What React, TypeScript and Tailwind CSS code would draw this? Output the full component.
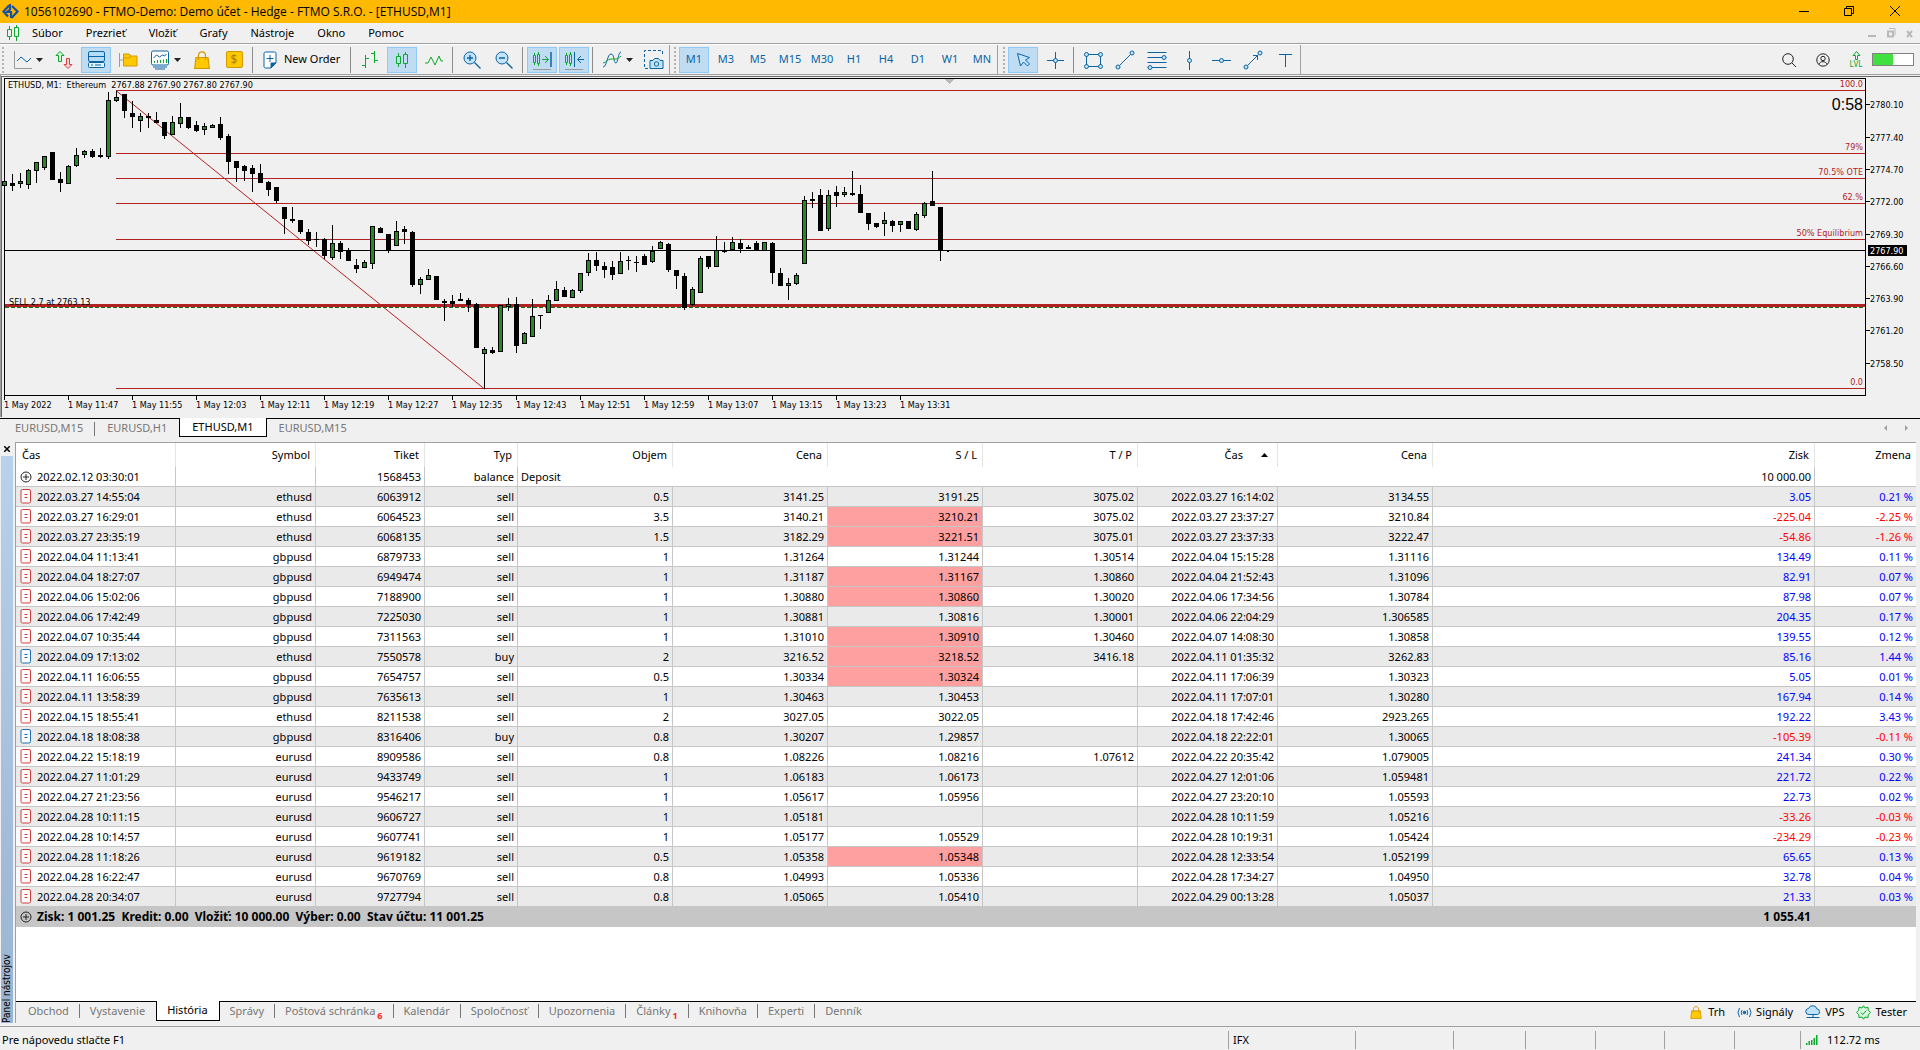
import React, { useState } from 'react';
import clsx from 'clsx';

type Candle = [high: number, low: number, top: number, bottom: number, up: 0 | 1];

// One candle per minute, 8px apart: wick top, wick bottom, body top, body bottom, bullish
const CANDLES: Candle[] = [
  [106, 111, 106, 111, 1], [99, 116, 108, 111, 0], [98, 113, 106, 109, 1], [94, 114, 95, 110, 1],
  [87, 108, 87, 96, 1], [81, 95, 81, 93, 1], [77, 105, 77, 105, 0], [97, 117, 104, 108, 0],
  [90, 109, 91, 109, 1], [73, 92, 80, 91, 1], [75, 83, 76, 80, 1], [74, 83, 76, 82, 0],
  [73, 83, 80, 82, 0], [17, 84, 25, 82, 1], [16, 27, 22, 26, 1], [19, 43, 19, 36, 0],
  [26, 53, 38, 42, 0], [38, 57, 41, 46, 1], [38, 53, 41, 43, 0], [37, 48, 45, 48, 0],
  [47, 64, 47, 61, 0], [41, 60, 47, 60, 1], [28, 53, 42, 49, 1], [42, 54, 42, 53, 0],
  [46, 57, 50, 56, 0], [48, 60, 51, 55, 1], [49, 53, 50, 53, 1], [42, 65, 49, 63, 0],
  [59, 99, 61, 87, 0], [86, 107, 86, 93, 0], [90, 106, 91, 96, 0], [90, 117, 93, 99, 0],
  [89, 108, 98, 108, 0], [106, 121, 107, 115, 0], [112, 128, 112, 126, 0], [132, 159, 132, 144, 0],
  [132, 148, 144, 146, 0], [145, 159, 145, 157, 0], [154, 170, 157, 166, 0], [157, 172, 164, 165, 0],
  [163, 184, 164, 181, 0], [150, 185, 168, 183, 1], [166, 184, 168, 177, 0], [173, 186, 175, 186, 0],
  [184, 198, 190, 194, 0], [185, 193, 187, 193, 1], [151, 194, 151, 189, 1], [152, 158, 153, 158, 0],
  [159, 178, 159, 175, 0], [146, 171, 156, 171, 1], [151, 169, 154, 157, 0], [156, 212, 157, 210, 0],
  [202, 219, 204, 210, 1], [194, 205, 200, 205, 1], [201, 225, 201, 225, 0], [224, 246, 226, 228, 0],
  [220, 232, 226, 229, 0], [218, 226, 224, 226, 0], [223, 237, 225, 230, 0], [228, 273, 229, 273, 0],
  [272, 314, 274, 279, 1], [272, 279, 275, 278, 0], [230, 277, 230, 277, 1], [223, 236, 229, 232, 1],
  [222, 278, 229, 271, 0], [257, 269, 258, 269, 1], [224, 262, 241, 262, 1], [240, 254, 240, 241, 0],
  [220, 238, 225, 238, 1], [206, 226, 214, 226, 1], [212, 222, 215, 222, 0], [214, 223, 215, 223, 1],
  [198, 218, 198, 216, 1], [178, 201, 185, 198, 1], [177, 196, 185, 191, 0], [187, 203, 191, 195, 0],
  [186, 205, 192, 200, 0], [177, 199, 186, 199, 1], [181, 195, 185, 186, 0], [181, 197, 187, 188, 0],
  [179, 190, 181, 190, 0], [171, 188, 176, 187, 1], [166, 174, 167, 174, 1], [168, 197, 169, 195, 0],
  [195, 214, 195, 201, 0], [198, 235, 201, 233, 0], [212, 231, 214, 230, 1], [181, 218, 183, 218, 1],
  [181, 194, 181, 192, 0], [161, 192, 175, 192, 1], [167, 178, 176, 177, 0], [162, 176, 167, 175, 1],
  [164, 178, 168, 174, 0], [170, 174, 172, 174, 0], [166, 176, 168, 175, 0], [167, 176, 167, 176, 1],
  [167, 209, 168, 198, 0], [193, 211, 198, 211, 0], [203, 225, 208, 211, 1], [198, 210, 200, 209, 1],
  [121, 189, 125, 189, 1], [117, 133, 124, 126, 0], [114, 156, 120, 156, 0], [115, 156, 120, 154, 1],
  [111, 132, 117, 121, 0], [112, 122, 117, 120, 1], [96, 121, 118, 120, 0], [110, 138, 119, 138, 0],
  [138, 155, 138, 149, 0], [148, 153, 148, 152, 0], [137, 161, 145, 149, 1], [145, 157, 146, 151, 0],
  [146, 157, 146, 150, 1], [146, 154, 146, 154, 0], [137, 156, 139, 155, 1], [127, 143, 128, 141, 1],
  [96, 131, 126, 131, 0], [132, 186, 132, 176, 0],
];

const FIB_LEVELS = [
  { y: 15, label: '100.0' },
  { y: 78, label: '79%' },
  { y: 103, label: '70.5% OTE' },
  { y: 128, label: '62.%' },
  { y: 164, label: '50% Equilibrium' },
  { y: 313, label: '0.0' },
];

const PRICES = [
  { y: 29, label: '2780.10' },
  { y: 62, label: '2777.40' },
  { y: 94, label: '2774.70' },
  { y: 126, label: '2772.00' },
  { y: 159, label: '2769.30' },
  { y: 191, label: '2766.60' },
  { y: 223, label: '2763.90' },
  { y: 255, label: '2761.20' },
  { y: 288, label: '2758.50' },
];

const TIMES = [
  '1 May 2022', '1 May 11:47', '1 May 11:55', '1 May 12:03', '1 May 12:11', '1 May 12:19', '1 May 12:27', '1 May 12:35',
  '1 May 12:43', '1 May 12:51', '1 May 12:59', '1 May 13:07', '1 May 13:15', '1 May 13:23', '1 May 13:31',
];

interface Deal {
  open: string;
  symbol: string;
  ticket: string;
  type: 'buy' | 'sell';
  volume: string;
  price: string;
  sl: string;
  tp: string;
  close: string;
  closePrice: string;
  profit: string;
  change: string;
  slHit?: boolean;
}

const deal = (
  open: string, symbol: string, ticket: string, type: 'buy' | 'sell', volume: string, price: string, sl: string,
  tp: string, close: string, closePrice: string, profit: string, change: string, slHit = false,
): Deal => ({ open, symbol, ticket, type, volume, price, sl, tp, close, closePrice, profit, change, slHit });

const DEALS: Deal[] = [
  deal('2022.03.27 14:55:04', 'ethusd', '6063912', 'sell', '0.5', '3141.25', '3191.25', '3075.02', '2022.03.27 16:14:02', '3134.55', '3.05', '0.21 %'),
  deal('2022.03.27 16:29:01', 'ethusd', '6064523', 'sell', '3.5', '3140.21', '3210.21', '3075.02', '2022.03.27 23:37:27', '3210.84', '-225.04', '-2.25 %', true),
  deal('2022.03.27 23:35:19', 'ethusd', '6068135', 'sell', '1.5', '3182.29', '3221.51', '3075.01', '2022.03.27 23:37:33', '3222.47', '-54.86', '-1.26 %', true),
  deal('2022.04.04 11:13:41', 'gbpusd', '6879733', 'sell', '1', '1.31264', '1.31244', '1.30514', '2022.04.04 15:15:28', '1.31116', '134.49', '0.11 %'),
  deal('2022.04.04 18:27:07', 'gbpusd', '6949474', 'sell', '1', '1.31187', '1.31167', '1.30860', '2022.04.04 21:52:43', '1.31096', '82.91', '0.07 %', true),
  deal('2022.04.06 15:02:06', 'gbpusd', '7188900', 'sell', '1', '1.30880', '1.30860', '1.30020', '2022.04.06 17:34:56', '1.30784', '87.98', '0.07 %', true),
  deal('2022.04.06 17:42:49', 'gbpusd', '7225030', 'sell', '1', '1.30881', '1.30816', '1.30001', '2022.04.06 22:04:29', '1.306585', '204.35', '0.17 %'),
  deal('2022.04.07 10:35:44', 'gbpusd', '7311563', 'sell', '1', '1.31010', '1.30910', '1.30460', '2022.04.07 14:08:30', '1.30858', '139.55', '0.12 %', true),
  deal('2022.04.09 17:13:02', 'ethusd', '7550578', 'buy', '2', '3216.52', '3218.52', '3416.18', '2022.04.11 01:35:32', '3262.83', '85.16', '1.44 %', true),
  deal('2022.04.11 16:06:55', 'gbpusd', '7654757', 'sell', '0.5', '1.30334', '1.30324', '', '2022.04.11 17:06:39', '1.30323', '5.05', '0.01 %', true),
  deal('2022.04.11 13:58:39', 'gbpusd', '7635613', 'sell', '1', '1.30463', '1.30453', '', '2022.04.11 17:07:01', '1.30280', '167.94', '0.14 %'),
  deal('2022.04.15 18:55:41', 'ethusd', '8211538', 'sell', '2', '3027.05', '3022.05', '', '2022.04.18 17:42:46', '2923.265', '192.22', '3.43 %'),
  deal('2022.04.18 18:08:38', 'gbpusd', '8316406', 'buy', '0.8', '1.30207', '1.29857', '', '2022.04.18 22:22:01', '1.30065', '-105.39', '-0.11 %'),
  deal('2022.04.22 15:18:19', 'eurusd', '8909586', 'sell', '0.8', '1.08226', '1.08216', '1.07612', '2022.04.22 20:35:42', '1.079005', '241.34', '0.30 %'),
  deal('2022.04.27 11:01:29', 'eurusd', '9433749', 'sell', '1', '1.06183', '1.06173', '', '2022.04.27 12:01:06', '1.059481', '221.72', '0.22 %'),
  deal('2022.04.27 21:23:56', 'eurusd', '9546217', 'sell', '1', '1.05617', '1.05956', '', '2022.04.27 23:20:10', '1.05593', '22.73', '0.02 %'),
  deal('2022.04.28 10:11:15', 'eurusd', '9606727', 'sell', '1', '1.05181', '', '', '2022.04.28 10:11:59', '1.05216', '-33.26', '-0.03 %'),
  deal('2022.04.28 10:14:57', 'eurusd', '9607741', 'sell', '1', '1.05177', '1.05529', '', '2022.04.28 10:19:31', '1.05424', '-234.29', '-0.23 %'),
  deal('2022.04.28 11:18:26', 'eurusd', '9619182', 'sell', '0.5', '1.05358', '1.05348', '', '2022.04.28 12:33:54', '1.052199', '65.65', '0.13 %', true),
  deal('2022.04.28 16:22:47', 'eurusd', '9670769', 'sell', '0.8', '1.04993', '1.05336', '', '2022.04.28 17:34:27', '1.04950', '32.78', '0.04 %'),
  deal('2022.04.28 20:34:07', 'eurusd', '9727794', 'sell', '0.8', '1.05065', '1.05410', '', '2022.04.29 00:13:28', '1.05037', '21.33', '0.03 %'),
];

const BLUE = '#0a64a4';
const GREEN = '#0aa82c';

const Icon: React.FC<{ w?: number; h?: number; children: React.ReactNode; color?: string }> = ({
  w = 20,
  h = 20,
  color = BLUE,
  children,
}) => (
  <svg width={w} height={h} viewBox={`0 0 ${w} ${h}`} fill="none" stroke={color} className="shrink-0" aria-hidden="true">
    {children}
  </svg>
);

const Caret = () => (
  <svg width="7" height="4" viewBox="0 0 7 4" className="shrink-0" aria-hidden="true">
    <path d="M0 0h7L3.500 4z" fill="#222" />
  </svg>
);

const CandlesGlyph = () => (
  <Icon w={14} h={16} color={GREEN}>
    <path d="M3.500 1v3M3.500 12v3M10.500 0v2M10.500 12v4" />
    <path d="M1.500 4.500h4v7h-4zM8.500 2.500h4v9h-4z" />
  </Icon>
);

const Bag: React.FC<{ w: number; h: number }> = ({ w, h }) => (
  <svg width={w} height={h} viewBox="0 0 16 18" fill="none" stroke="#d29a00" strokeWidth="1.2" className="shrink-0" aria-hidden="true">
    <path d="M2 6.500h12l1.300 11H.7z" fill="#ffc800" />
    <path d="M4.500 9V4.500C4.500 2 6 .8 8 .8s3.500 1.200 3.500 3.700V9" />
  </svg>
);

const ToolButton: React.FC<{
  label: string;
  active?: boolean;
  size?: string;
  children: React.ReactNode;
}> = ({ label, active = false, size = 'w-[30px] justify-center', children }) => (
  <button
    type="button"
    aria-label={label}
    aria-pressed={active}
    className={clsx(
      'flex h-[26px] shrink-0 items-center border',
      size,
      active ? 'border-[#90c8f6] bg-[#c0dcf3]' : 'border-transparent hover:bg-[#d8e9f7]',
    )}
  >
    {children}
  </button>
);

const Grip = () => (
  <span className="flex h-[26px] w-[5px] shrink-0 flex-col items-center justify-between">
    {[0, 1, 2, 3, 4, 5, 6].map((i) => (
      <span key={i} className="h-[2px] w-[2px] bg-[#b4b4b4]" />
    ))}
  </span>
);

const Separator = () => (
  <span className="flex h-[26px] w-1 shrink-0 pl-px">
    <span className="w-px bg-[#8c8c8c]" />
  </span>
);

const Toolbar: React.FC<{ label: string; children: React.ReactNode }> = ({ label, children }) => (
  <div role="toolbar" aria-label={label} className="flex items-center gap-0.5 border-r border-[#a0a0a0]">
    {children}
  </div>
);

const TitleBar = () => (
  <header className="flex h-[23px] items-center bg-[#ffb900] pl-0.5">
    <svg width="17" height="17" viewBox="0 0 17 17" fill="none" stroke="#1450a0" strokeWidth="2.2" aria-hidden="true">
      <path d="M7 2.500 1.500 8.500 6 13.500" />
      <path d="M10 3 15.500 8.500 9.500 15" />
      <path d="M8 1v5.500L5 9h4v6" />
    </svg>
    <h1 className="ml-[5px] flex-1 font-['Open_Sans',sans-serif] text-xs leading-5">
      1056102690 - FTMO-Demo: Demo účet - Hedge - FTMO S.R.O. - [ETHUSD,M1]
    </h1>
    <div className="flex h-full items-center pr-0.5 pb-0.5">
      <button type="button" aria-label="Minimalizovať" className="flex w-[45px] justify-center">
        <svg width="10" height="10" viewBox="0 0 10 10" stroke="#000"><path d="M0 5.500h10" /></svg>
      </button>
      <button type="button" aria-label="Obnoviť" className="flex w-[45px] justify-center">
        <svg width="10" height="10" viewBox="0 0 10 10" stroke="#000" fill="none">
          <path d="M.5 2.500h7v7h-7zM2.500 2.500v-2h7v7h-2" />
        </svg>
      </button>
      <button type="button" aria-label="Zavrieť" className="flex w-[47px] justify-center">
        <svg width="10" height="10" viewBox="0 0 10 10" stroke="#000"><path d="M0 0l10 10M10 0 0 10" /></svg>
      </button>
    </div>
  </header>
);

const MenuBar = () => (
  <nav className="flex h-[21px] items-center border-b border-[#a0a0a0] pl-1.5">
    <CandlesGlyph />
    <div className="ml-3 flex flex-1 gap-[23px]">
      {['Súbor', 'Prezrieť', 'Vložiť', 'Grafy', 'Nástroje', 'Okno', 'Pomoc'].map((item) => (
        <button key={item} type="button" className="leading-5">
          {item}
        </button>
      ))}
    </div>
    <svg width="50" height="12" viewBox="0 0 50 12" fill="none" stroke="#b9b9b9" className="mr-1.5" aria-hidden="true">
      <path d="M4 9h8" strokeWidth="2" />
      <path d="M24 4.500h5v5h-5z" strokeWidth="2" />
      <path d="M25 1.500h6v7" />
      <path d="m43 4 5 6m0-6-5 6" strokeWidth="2" />
    </svg>
  </nav>
);

const FRAMES = ['M1', 'M3', 'M5', 'M15', 'M30', 'H1', 'H4', 'D1', 'W1', 'MN'];

const ToolBars = () => {
  const [frame, setFrame] = useState('M1');

  return (
    <div className="flex h-[30px] border-t border-white">
      <Toolbar label="Štandardné">
        <Grip />
        <ToolButton label="Graf" size="w-10 pl-1 gap-1">
          <Icon>
            <path d="M2.500 1v17.500H20" stroke="#9a9a9a" />
            <path d="M5 11l4-4 6 5 4-4" />
          </Icon>
          <Caret />
        </ToolButton>
        <ToolButton label="Obchodovanie">
          <Icon>
            <path d="M4.500 11.500V5.500H2l4-4 4 4H7.500v6z" stroke={GREEN} fill="#d9f5dd" />
            <path d="M12.500 8.500h3v6H18l-4 4-4-4h2.500z" stroke="#e03c3c" fill="#fbd9d9" />
          </Icon>
        </ToolButton>
        <ToolButton label="Panel nástrojov" active>
          <Icon>
            <rect x="2.500" y="1.500" width="16" height="10" rx="1.500" fill="#b5dcf8" />
            <path d="M2.500 6.500h16" />
            <rect x="2.500" y="12.500" width="16" height="5" rx="1" fill="#e4f3fd" />
            <path d="M5 15h2M9 15h6" />
          </Icon>
        </ToolButton>
        <ToolButton label="Navigátor">
          <Icon>
            <path d="M1.500 3v14M2 10h4" stroke="#9a9a9a" />
            <path d="M5.500 4h6l1 2h6.500v10h-13.500z" fill="#ffc800" stroke="#d29a00" />
            <path d="M5.500 8h6l1-2" stroke="#d29a00" />
          </Icon>
        </ToolButton>
        <ToolButton label="Dátové okno" size="w-10 pl-1 gap-1">
          <Icon>
            <rect x="1.500" y="1" width="17" height="14" rx="1.500" fill="#fff" />
            <path d="M3 17h14M5 19h10" />
            <path d="M3.500 8l3-3 3 2 3-2 2 1 2-2" />
            <path d="M4.500 13v-2M7.500 13v-3M10.500 13v-3M13.500 13V9.500M16.500 13V9" stroke={GREEN} />
          </Icon>
          <Caret />
        </ToolButton>
        <ToolButton label="Trh">
          <Bag w={16} h={18} />
        </ToolButton>
        <ToolButton label="Predplatné">
          <span className="flex h-[17px] w-[17px] items-center justify-center rounded-xs border border-[#d29a00] bg-[#ffc800] text-xs leading-none text-[#b07c00]">
            $
          </span>
        </ToolButton>
        <Separator />
        <ToolButton label="New Order" size="w-[90px] pl-[5px] gap-[7px]">
          <Icon w={14} h={18}>
            <path d="M1 2.500A1.500 1.500 0 0 1 2.500 1h9A1.500 1.500 0 0 1 13 2.500V12l-5 5H2.500A1.500 1.500 0 0 1 1 15.500z" fill="#fff" />
            <path d="M13 12H8v5z" fill={BLUE} />
            <path d="M7 4v7M3.500 7.500h7" />
          </Icon>
          <span>New Order</span>
        </ToolButton>
        <Separator />
        <ToolButton label="Stĺpcový graf">
          <Icon color={GREEN}>
            <path d="M5.500 5v13M2 15.500h3.500M5.500 8.500H9M14.500 1v12M11 3.500h3.500M14.500 10.500H18" />
          </Icon>
        </ToolButton>
        <ToolButton label="Sviečkový graf" active>
          <CandlesGlyph />
        </ToolButton>
        <ToolButton label="Čiarový graf">
          <Icon color={GREEN}>
            <path d="M1 13h3l3-6 4 8 4-9 2 5h2" />
          </Icon>
        </ToolButton>
        <Separator />
        <ToolButton label="Priblížiť">
          <Icon>
            <circle cx="8" cy="8" r="6" fill="#c4e4fa" />
            <path d="M12.500 12.500l6 6M8 5v6M5 8h6" strokeWidth="1.400" />
          </Icon>
        </ToolButton>
        <ToolButton label="Oddialiť">
          <Icon>
            <circle cx="8" cy="8" r="6" fill="#c4e4fa" />
            <path d="M12.500 12.500l6 6M5 8h6" strokeWidth="1.400" />
          </Icon>
        </ToolButton>
        <Separator />
        <ToolButton label="Automatický posun" active>
          <Icon>
            <path d="M2.500 3v12M6.500 2v14" stroke={GREEN} />
            <path d="M1.500 5.500h2v7h-2zM5.500 4.500h2v9h-2z" fill="#c0dcf3" stroke={GREEN} />
            <path d="M10 9.500h6M13 6l3.500 3.500L13 13" stroke={GREEN} />
            <path d="M19 2v15" strokeWidth="1.500" />
            <path d="M1 19.500h18" stroke="#9a9a9a" />
          </Icon>
        </ToolButton>
        <ToolButton label="Odsadenie grafu" active>
          <Icon>
            <path d="M2.500 3v12M6.500 2v14" stroke={GREEN} />
            <path d="M1.500 5.500h2v7h-2zM5.500 4.500h2v9h-2z" fill="#c0dcf3" stroke={GREEN} />
            <path d="M10.500 2v15M20 9.500h-6M17 6l-3.500 3.500L17 13" />
            <path d="M1 19.500h18" stroke="#9a9a9a" />
          </Icon>
        </ToolButton>
        <Separator />
        <ToolButton label="Indikátory" size="w-10 pl-1 gap-1">
          <Icon>
            <path d="M1 17c4 0 4-13 8-13s2 9 5 9c2 0 2-11 5-11" />
            <path d="M1 13c3 0 4-4 8-4s6 1 10-3" stroke={GREEN} />
          </Icon>
          <Caret />
        </ToolButton>
        <ToolButton label="Snímka obrazovky">
          <Icon>
            <path d="M4 18.500H.5v-18h18V6" strokeDasharray="3 2" />
            <path d="M6 10.500h3l1.500-2h4l1.500 2h3v8H6z" fill="#c4e4fa" />
            <circle cx="12.500" cy="14" r="2.200" />
          </Icon>
        </ToolButton>
      </Toolbar>
      <span className="w-0.5" />
      <Toolbar label="Časové rámce">
        <Grip />
        {FRAMES.map((item) => (
          <button
            key={item}
            type="button"
            onClick={() => setFrame(item)}
            className={clsx(
              'h-[26px] w-[30px] shrink-0 border text-center text-[#0a64a4]',
              item === frame ? 'border-[#90c8f6] bg-[#c0dcf3]' : 'border-transparent',
            )}
          >
            {item}
          </button>
        ))}
      </Toolbar>
      <span className="w-[3px]" />
      <Toolbar label="Objekty">
        <Grip />
        <ToolButton label="Kurzor" active>
          <Icon>
            <path d="M4.500 3.500l3 12.500 3-4 4 4 2-2-4-4 4-2.500z" fill="#c4e4fa" />
          </Icon>
        </ToolButton>
        <ToolButton label="Zameriavací kríž">
          <Icon>
            <path d="M10.500 2v17M2 10.500h17" />
            <circle cx="10.500" cy="10.500" r="2" fill="#c4e4fa" />
          </Icon>
        </ToolButton>
        <Separator />
        <ToolButton label="Obdĺžnik">
          <Icon>
            <path d="M3.500 4.500h14v12h-14z" />
            {[[3.5, 4.5], [17.5, 4.5], [3.5, 16.5], [17.5, 16.5]].map(([x, y]) => (
              <circle key={`${x}-${y}`} cx={x} cy={y} r="2" fill="#c4e4fa" />
            ))}
          </Icon>
        </ToolButton>
        <ToolButton label="Trendová čiara">
          <Icon>
            <path d="M3 17 17 3" />
            <circle cx="3" cy="17" r="2" fill="#c4e4fa" />
            <circle cx="17" cy="3" r="2" fill="#c4e4fa" />
          </Icon>
        </ToolButton>
        <ToolButton label="Fibonacci">
          <Icon>
            <path d="M.5 2.500h19M.5 7.500h19M.5 12.500h19M.5 17.500h19" />
            <circle cx="17" cy="7.500" r="2" fill="#c4e4fa" />
            <circle cx="3" cy="17.500" r="2" fill="#c4e4fa" />
          </Icon>
        </ToolButton>
        <ToolButton label="Zvislá čiara">
          <Icon>
            <path d="M10.500 1v19" />
            <circle cx="10.500" cy="10.500" r="2" fill="#c4e4fa" />
          </Icon>
        </ToolButton>
        <ToolButton label="Vodorovná čiara">
          <Icon>
            <path d="M1 10.500h19" />
            <circle cx="10.500" cy="10.500" r="2" fill="#c4e4fa" />
          </Icon>
        </ToolButton>
        <ToolButton label="Šípka">
          <Icon>
            <path d="M3 17 17 3M10 5.500h4.500V10" />
            <circle cx="3" cy="17" r="2" fill="#c4e4fa" />
            <circle cx="17" cy="3" r="2" fill="#c4e4fa" />
          </Icon>
        </ToolButton>
        <ToolButton label="Text">
          <Icon>
            <path d="M4 4.500h13M10.500 4v13" />
          </Icon>
        </ToolButton>
      </Toolbar>
      <div className="flex flex-1 items-center justify-end pr-1.5">
        <button type="button" aria-label="Hľadať" className="flex w-[34px] justify-center">
          <Icon w={14} h={14} color="#222">
            <circle cx="6" cy="6" r="5.300" />
            <path d="m10 10 4 4" />
          </Icon>
        </button>
        <button type="button" aria-label="Účet" className="flex w-[34px] justify-center">
          <Icon w={14} h={14} color="#222">
            <circle cx="7" cy="7" r="6.200" />
            <circle cx="7" cy="5.500" r="2.200" />
            <path d="M3 11.500c.5-2 2-2.800 4-2.800s3.500.8 4 2.800" />
          </Icon>
        </button>
        <button type="button" className="flex w-8 flex-col items-center text-[8px] leading-[8px] text-[#0aa82c]">
          <Icon w={9} h={9} color={GREEN}>
            <path d="M3.500 8.500v-4h-2.500l3.500-4 3.500 4H5.500v4z" />
          </Icon>
          LVL
        </button>
        <span className="flex h-[13px] w-[42px] border border-[#828282] bg-white">
          <span className="w-1/2 bg-[#40e040]" />
        </span>
      </div>
    </div>
  );
};

const Chart = () => (
  <section
    aria-label="ETHUSD, M1"
    className="flex h-[343px] border-t border-l border-[#a0a0a0] pt-px font-['DejaVu_Sans_Condensed','DejaVu_Sans',sans-serif] text-[9px]"
  >
    <svg height="341" className="min-w-0 flex-1 shadow-[inset_1px_1px_0_#696969]" shapeRendering="crispEdges">
      {/* frame */}
      <rect x="3" y="2" width="100%" height="1" />
      <rect x="3" y="2" width="1" height="318" />
      <rect x="3" y="319" width="100%" height="1" />
      <path d="M943 3h10l-5 5z" fill="#b9b9b9" />

      {/* fibonacci */}
      {FIB_LEVELS.map((level) => (
        <g key={level.label} fill="#b22222">
          <rect x="115" y={level.y - 1} width="100%" height="1" />
          <svg x="100%" overflow="visible">
            <text x="-2" y={level.y - 4} textAnchor="end">{level.label}</text>
          </svg>
        </g>
      ))}
      <path d="M115.500 15 483.500 313" stroke="#b22222" shapeRendering="auto" />
      <rect x="4" y="174" width="100%" height="1" />

      {/* open position */}
      <rect x="4" y="228" width="100%" height="3" fill="#b22222" />
      <rect x="4" y="231" width="100%" height="1" fill="#fff" />
      <line x1="4" x2="100%" y1="231.500" y2="231.500" stroke="#107010" strokeDasharray="4 2" />

      <g transform="translate(0 -1)">
        {CANDLES.map(([high, low, top, bottom, up], i) => {
          const x = 3 + i * 8;
          return (
            <g key={i}>
              <rect x={x} y={high} width="1" height={low - high} />
              <rect x={x - 2} y={top} width="5" height={bottom - top} />
              {up === 1 && <rect x={x - 1} y={top + 1} width="3" height={bottom - top - 2} fill="#228b22" />}
            </g>
          );
        })}
      </g>
      <rect x="946" y="175" width="2" height="1" />

      <text x="7" y="12" className="whitespace-pre">{'ETHUSD, M1:  Ethereum  2767.88 2767.90 2767.80 2767.90'}</text>
      <text x="8" y="229">SELL 2.7 at 2763.13</text>
      <svg x="100%" overflow="visible">
        <text x="-2" y="34" textAnchor="end" className="font-['Liberation_Sans'] text-base">0:58</text>
      </svg>

      {TIMES.map((time, i) => (
        <g key={time}>
          <rect x={3 + i * 64} y="320" width="1" height="4" />
          <text x={3 + i * 64} y="332">{time}</text>
        </g>
      ))}
    </svg>
    <svg width="55" height="341" className="border-t border-[#696969]" shapeRendering="crispEdges">
      <rect x="0" y="1" width="1" height="318" />
      {PRICES.map((price) => (
        <g key={price.label}>
          <rect x="1" y={price.y - 2} width="4" height="1" />
          <text x="5" y={price.y + 2}>{price.label}</text>
        </g>
      ))}
      <rect x="3" y="168" width="39" height="11" />
      <text x="5" y="177" fill="#fff">2767.90</text>
    </svg>
  </section>
);

const ChartTabs = () => {
  const [tab, setTab] = useState(2);

  return (
    <div className="flex h-5 border-t border-black pl-[3px]">
      {['EURUSD,M15', 'EURUSD,H1', 'ETHUSD,M1', 'EURUSD,M15'].map((name, i) => (
        <button
          key={i}
          type="button"
          onClick={() => setTab(i)}
          className={clsx(
            'flex h-[19px] items-center px-3',
            i === tab ? '-mt-px border-x border-b border-black bg-white' : 'text-[#777]',
            i === 0 && 'relative after:absolute after:right-0 after:h-3.5 after:w-px after:bg-[#777]',
          )}
        >
          {name}
        </button>
      ))}
      <span className="flex-1" />
      <svg width="24" height="18" viewBox="0 0 24 18" fill="#a0a0a0" className="mr-3" aria-hidden="true">
        <path d="M3 6v6L0 9zM21 6v6l3-3z" />
      </svg>
    </div>
  );
};

const PlusMark = () => (
  <svg width="12" height="12" viewBox="0 0 12 12" fill="none" stroke="#222" className="shrink-0" aria-hidden="true">
    <circle cx="6" cy="6" r="5" />
    <path d="M6 3v6M3 6h6" />
  </svg>
);

const DealMark: React.FC<{ type: 'buy' | 'sell' }> = ({ type }) => (
  <svg width="12" height="15" viewBox="0 0 12 15" fill="#fff" stroke={type === 'buy' ? '#1e6fb4' : '#d43a3a'} className="shrink-0" aria-hidden="true">
    <rect x="1" y=".5" width="9.500" height="13.500" rx="1.500" />
    <path d="M4.500 5.500h3M4.500 8.500h3" />
  </svg>
);

const HEADERS = ['Čas', 'Symbol', 'Tiket', 'Typ', 'Objem', 'Cena', 'S / L', 'T / P', 'Čas', 'Cena', 'Zisk', 'Zmena'];
const COLUMNS = ['w-40', 'w-[140px]', 'w-[109px]', 'w-[93px]', 'w-[155px]', 'w-[155px]', 'w-[155px]', 'w-[155px]', 'w-[140px]', 'w-[155px]', '', 'w-[101px]'];

const CELL = 'h-5 border-r border-b border-[#c6c6c6] pr-[3px] pl-1 py-0 text-right leading-[18px] whitespace-nowrap';

const HistoryTable = () => (
  <table className="w-full table-fixed border-separate border-spacing-0">
    <colgroup>
      {COLUMNS.map((width, i) => (
        <col key={i} className={width} />
      ))}
    </colgroup>
    <thead>
      <tr>
        {HEADERS.map((title, i) => (
          <th
            key={i}
            className={clsx(
              'h-6 border-r border-[#e5e5e5] py-0 font-normal last:border-r-0',
              i === 0 ? 'pl-1.5 text-left' : 'pr-[5px] text-right',
            )}
          >
            {i === 8 ? (
              <span className="flex items-center justify-end gap-[18px] pr-1">
                {title}
                <svg width="7" height="4" viewBox="0 0 7 4" aria-hidden="true"><path d="M0 4h7L3.500 0z" /></svg>
              </span>
            ) : (
              title
            )}
          </th>
        ))}
      </tr>
    </thead>
    <tbody>
      <tr>
        <td className={CELL}>
          <span className="flex items-center gap-[5px]"><PlusMark />2022.02.12 03:30:01</span>
        </td>
        <td className={CELL} />
        <td className={CELL}>1568453</td>
        <td className={CELL}>balance</td>
        <td colSpan={6} className="border-b border-[#c6c6c6] py-0 pl-[3px] leading-[18px]">Deposit</td>
        <td className={CELL}>10 000.00</td>
        <td className="border-b border-[#c6c6c6]" />
      </tr>
      {DEALS.map((row, i) => {
        const color = row.profit.startsWith('-') ? 'text-[#ff0000]' : 'text-[#0000ff]';
        return (
          <tr key={row.ticket} className={i % 2 === 0 ? 'bg-[#eaeaea]' : 'bg-white'}>
            <td className={CELL}>
              <span className="flex items-center gap-[5px]"><DealMark type={row.type} />{row.open}</span>
            </td>
            <td className={CELL}>{row.symbol}</td>
            <td className={CELL}>{row.ticket}</td>
            <td className={CELL}>{row.type}</td>
            <td className={CELL}>{row.volume}</td>
            <td className={CELL}>{row.price}</td>
            <td className={clsx(CELL, row.slHit && 'bg-[#ffa0a0]')}>{row.sl}</td>
            <td className={CELL}>{row.tp}</td>
            <td className={CELL}>{row.close}</td>
            <td className={CELL}>{row.closePrice}</td>
            <td className={clsx(CELL, color)}>{row.profit}</td>
            <td className={clsx(CELL, color, 'border-r-0')}>{row.change}</td>
          </tr>
        );
      })}
    </tbody>
    <tfoot>
      <tr className="bg-[#c6c6c6] text-xs font-bold">
        <td colSpan={10} className="h-5 py-0 pl-1 leading-5">
          <span className="flex items-center gap-[5px] whitespace-pre">
            <PlusMark />
            {'Zisk: 1 001.25  Kredit: 0.00  Vložiť: 10 000.00  Výber: 0.00  Stav účtu: 11 001.25'}
          </span>
        </td>
        <td className="py-0 pr-1 text-right leading-5">1 055.41</td>
        <td />
      </tr>
    </tfoot>
  </table>
);

const PANEL_TABS = [
  { name: 'Obchod' },
  { name: 'Vystavenie' },
  { name: 'História' },
  { name: 'Správy' },
  { name: 'Poštová schránka', badge: '6' },
  { name: 'Kalendár' },
  { name: 'Spoločnosť' },
  { name: 'Upozornenia' },
  { name: 'Články', badge: '1' },
  { name: 'Knihovňa' },
  { name: 'Experti' },
  { name: 'Denník' },
];

const PanelTabs = () => {
  const [tab, setTab] = useState('História');
  const activeIndex = PANEL_TABS.findIndex((item) => item.name === tab);

  return (
    <div className="flex h-[22px] items-start border-t border-black bg-[#f0f0f0] pl-0.5">
      {PANEL_TABS.map((item, i) => (
        <button
          key={item.name}
          type="button"
          onClick={() => setTab(item.name)}
          className={clsx(
            'relative flex items-center pr-[11px] pl-2.5',
            item.name === tab ? '-mt-px h-5 border-x border-b border-black bg-white' : 'h-[18px] text-[#777]',
            i !== activeIndex &&
              i !== activeIndex - 1 &&
              i !== PANEL_TABS.length - 1 &&
              'after:absolute after:right-0 after:h-3.5 after:w-px after:bg-[#777]',
          )}
        >
          {item.name}
          {item.badge && <span className="mt-2 ml-0.5 text-[9px] leading-none font-bold text-[#ff2020]">{item.badge}</span>}
        </button>
      ))}
      <div className="mt-0.5 flex flex-1 items-center justify-end gap-3 pr-[9px]">
        <a href="#trh" className="flex items-center gap-1.5">
          <Bag w={12} h={13} />
          Trh
        </a>
        <a href="#signaly" className="flex items-center gap-1">
          <Icon w={15} h={11}>
            <circle cx="7.500" cy="5.500" r="1.300" fill={BLUE} />
            <path d="M5 3Q3.500 5.500 5 8M2.500 1Q-.5 5.500 2.500 10M10 3q1.500 2.500 0 5M12.500 1q3 4.500 0 9" />
          </Icon>
          Signály
        </a>
        <a href="#vps" className="flex items-center gap-1">
          <Icon w={16} h={14}>
            <path d="M4 9.500a3 3 0 0 1-.5-6A4.500 4.500 0 0 1 12 4a2.800 2.800 0 0 1 .5 5.500z" fill="#bfe3fb" />
            <path d="M8 9.500v3M1.500 12.500h13" />
          </Icon>
          VPS
        </a>
        <a href="#tester" className="flex items-center gap-1">
          <Icon w={15} h={15} color={GREEN}>
            <path d="M7.500 .8 9 3l3-.8.3 3L14.500 7.500l-2.200 2.200-.3 3L9 12l-1.500 2.200L6 12l-3 .7-.3-3L.5 7.500l2.200-2.300.3-3L6 3z" fill="#d9f5dd" />
            <path d="m4.800 7.500 2 2 3.500-4" />
          </Icon>
          Tester
        </a>
      </div>
    </div>
  );
};

const STATUS_CELLS = ['w-[98px]', 'w-[72px]', 'w-[70px]', 'w-[69px]', 'w-[70px]', 'w-[66px]'];

const StatusBar = () => (
  <footer className="flex h-6 items-stretch border-t border-[#a0a0a0] pt-1 pb-px">
    <p className="flex flex-1 items-center pl-0.5">Pre nápovedu stlačte F1</p>
    <span className="flex w-[127px] items-center border-l border-[#a0a0a0] pl-1">IFX</span>
    {STATUS_CELLS.map((width, i) => (
      <span key={i} className={clsx('border-l border-[#a0a0a0]', width)} />
    ))}
    <span className="flex w-[120px] items-center gap-2 border-l border-[#a0a0a0] pl-[5px]">
      <svg width="13" height="10" viewBox="0 0 13 10" fill="#0aa82c" aria-hidden="true">
        <path d="M0 8h1.500v2H0zM2.500 6H4v4H2.500zM5 5h1.500v5H5zM7.500 3H9v7H7.500zM10 0h1.500v10H10z" />
      </svg>
      112.72 ms
    </span>
  </footer>
);

const App: React.FC = () => (
  <div className="flex min-h-screen flex-col bg-[#f0f0f0] font-['Noto_Sans','Open_Sans',sans-serif] text-[11px] text-black">
    <TitleBar />
    <MenuBar />
    <ToolBars />
    <main className="flex flex-1 flex-col">
      <Chart />
      <div className="mt-px">
        <ChartTabs />
      </div>
      <div className="mt-1 flex flex-1">
        <aside className="flex w-[15px] flex-col items-center pr-0.5">
          <button type="button" aria-label="Zavrieť panel" className="flex h-3.5 items-center">
            <svg width="6" height="6" viewBox="0 0 6 6" stroke="#000" strokeWidth="1.500"><path d="m0 0 6 6M6 0 0 6" /></svg>
          </button>
          <span className="flex w-3 flex-1 rotate-180 items-center bg-gradient-to-t from-[#b9d1ea] to-[#99b4d1] font-['DejaVu_Sans_Condensed','DejaVu_Sans',sans-serif] text-[10px] leading-3 [writing-mode:vertical-rl]">
            Panel nástrojov
          </span>
        </aside>
        <section className="mr-1 flex min-w-0 flex-1 flex-col border-t border-l border-[#a0a0a0] bg-white">
          <div className="flex-1">
            <HistoryTable />
          </div>
          <PanelTabs />
        </section>
      </div>
    </main>
    <div className="h-[3px]" />
    <StatusBar />
  </div>
);

export default App;
